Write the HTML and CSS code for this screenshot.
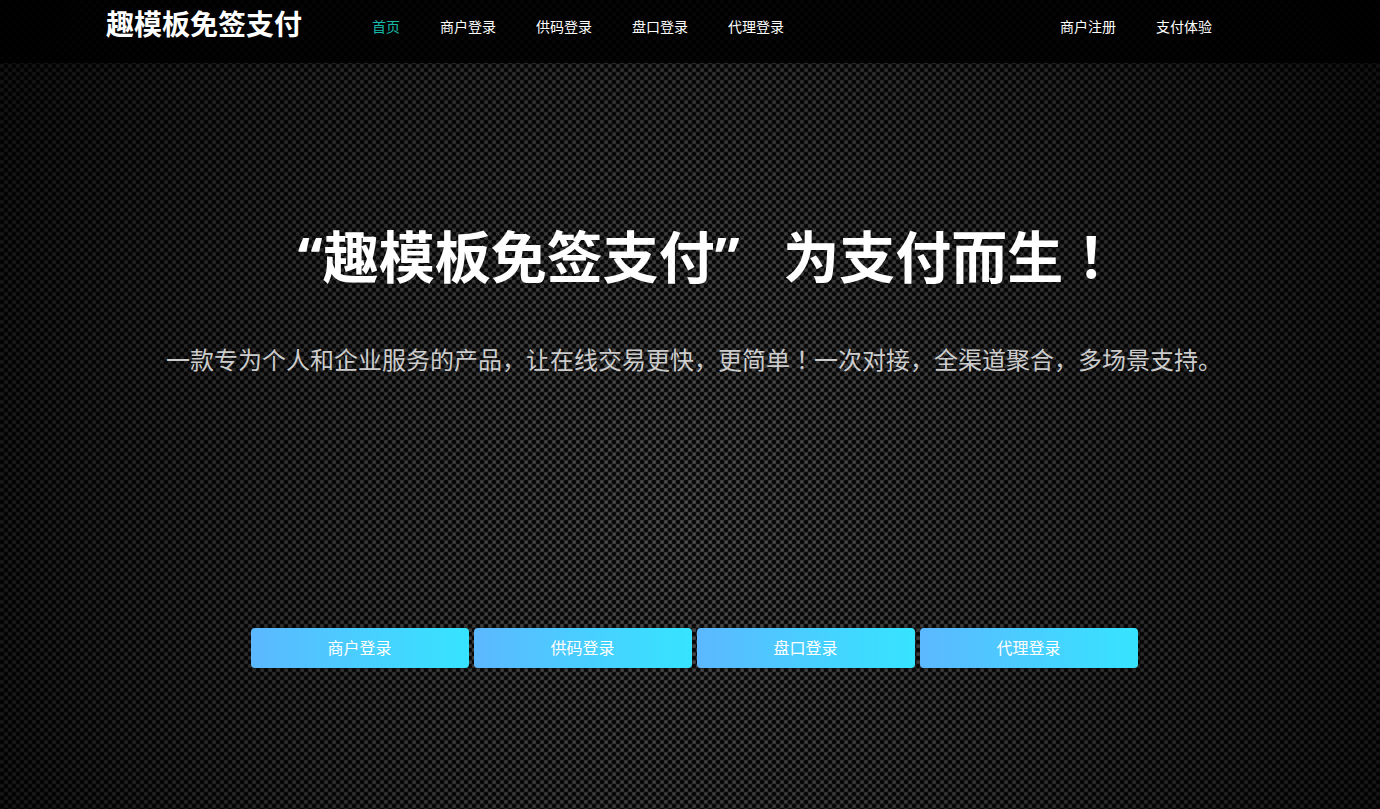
FILE: index.html
```html
<!DOCTYPE html>
<html lang="zh-CN">
<head>
    <meta charset="UTF-8">
    <meta name="viewport" content="width=device-width, initial-scale=1.0">
    <title>趣模板免签支付</title>
    <link rel="stylesheet" href="styles.css">
</head>
<body>

    <header class="header">
        <div class="header-inner">
            <a href="#" class="logo">趣模板免签支付</a>
            <nav class="nav">
                <a href="#" class="active">首页</a>
                <a href="#">商户登录</a>
                <a href="#">供码登录</a>
                <a href="#">盘口登录</a>
                <a href="#">代理登录</a>
            </nav>
            <nav class="nav nav-right">
                <a href="#">商户注册</a>
                <a href="#">支付体验</a>
            </nav>
        </div>
    </header>

    <main class="banner">
        <h1>&nbsp;&nbsp;“趣模板免签支付”&nbsp;&nbsp;&nbsp;为支付而生<span class="mark" lang="ja">！</span></h1>
        <p>一款专为个人和企业服务的产品，让在线交易更快，更简单<span class="mark" lang="ja">！</span>一次对接，全渠道聚合，多场景支持。</p>
        <div class="buttons">
            <a href="#" class="btn">商户登录</a>
            <a href="#" class="btn">供码登录</a>
            <a href="#" class="btn">盘口登录</a>
            <a href="#" class="btn">代理登录</a>
        </div>
    </main>

</body>
</html>
```

FILE: styles.css
```css
* {
    box-sizing: border-box;
}

/* 碳纤维纹理背景，四周渐暗 */
body {
    margin: 0;
    min-height: 100vh;
    font-family: "Open Sans", "Noto Sans CJK SC", sans-serif;
    color: #fff;
    background-color: #222;
    background-image:
        radial-gradient(ellipse 56% 110% at 50% 64%, rgba(0, 0, 0, 0) 0%, rgba(0, 0, 0, 0.25) 40%, rgba(0, 0, 0, 0.75) 100%),
        radial-gradient(ellipse 3px 3px at 6px 2px, #060606 0%, #060606 45%, transparent 100%),
        radial-gradient(ellipse 3px 3px at 2px 6px, #060606 0%, #060606 45%, transparent 100%),
        radial-gradient(ellipse 3px 3px at 2px 2px, #555 0%, #444 50%, transparent 100%),
        radial-gradient(ellipse 3px 3px at 6px 6px, #555 0%, #444 50%, transparent 100%);
    background-size: 100% 100%, 8px 8px, 8px 8px, 8px 8px, 8px 8px;
    background-repeat: no-repeat, repeat, repeat, repeat, repeat;
}

a {
    color: #fff;
    text-decoration: none;
}

.header {
    height: 63px;
    background-color: rgba(0, 0, 0, 0.85);
}

.header-inner {
    display: flex;
    max-width: 1168px;
    margin: 0 auto;
}

.logo {
    margin-right: 50px;
    font-size: 28px;
    font-weight: bold;
    line-height: 48px;
}

.nav {
    display: flex;
}

.nav a {
    padding: 0 20px;
    font-size: 14px;
    line-height: 54px;
}

.nav a.active,
.nav a:hover {
    color: #16baaa;
}

.nav-right {
    margin-left: auto;
    margin-right: 42px;
}

.banner {
    padding: 151px 0 40px 8px;
    text-align: center;
}

.banner h1 {
    margin: 0;
    font-size: 56px;
    line-height: 84px;
}

.banner p {
    margin: 44px 0 0;
    font-size: 24px;
    line-height: 36px;
    color: #ccc;
}

/* 感叹号居中显示 */
.mark {
    font-family: "Noto Sans CJK JP", sans-serif;
    line-height: 1;
}

.buttons {
    display: flex;
    justify-content: center;
    gap: 5px;
    margin-top: 250px;
}

.btn {
    width: 218px;
    border-radius: 4px;
    font-size: 16px;
    line-height: 40px;
    background-image: linear-gradient(to right, #5cb8ff, #36e4ff);
}

.btn:hover {
    opacity: 0.8;
}
```
